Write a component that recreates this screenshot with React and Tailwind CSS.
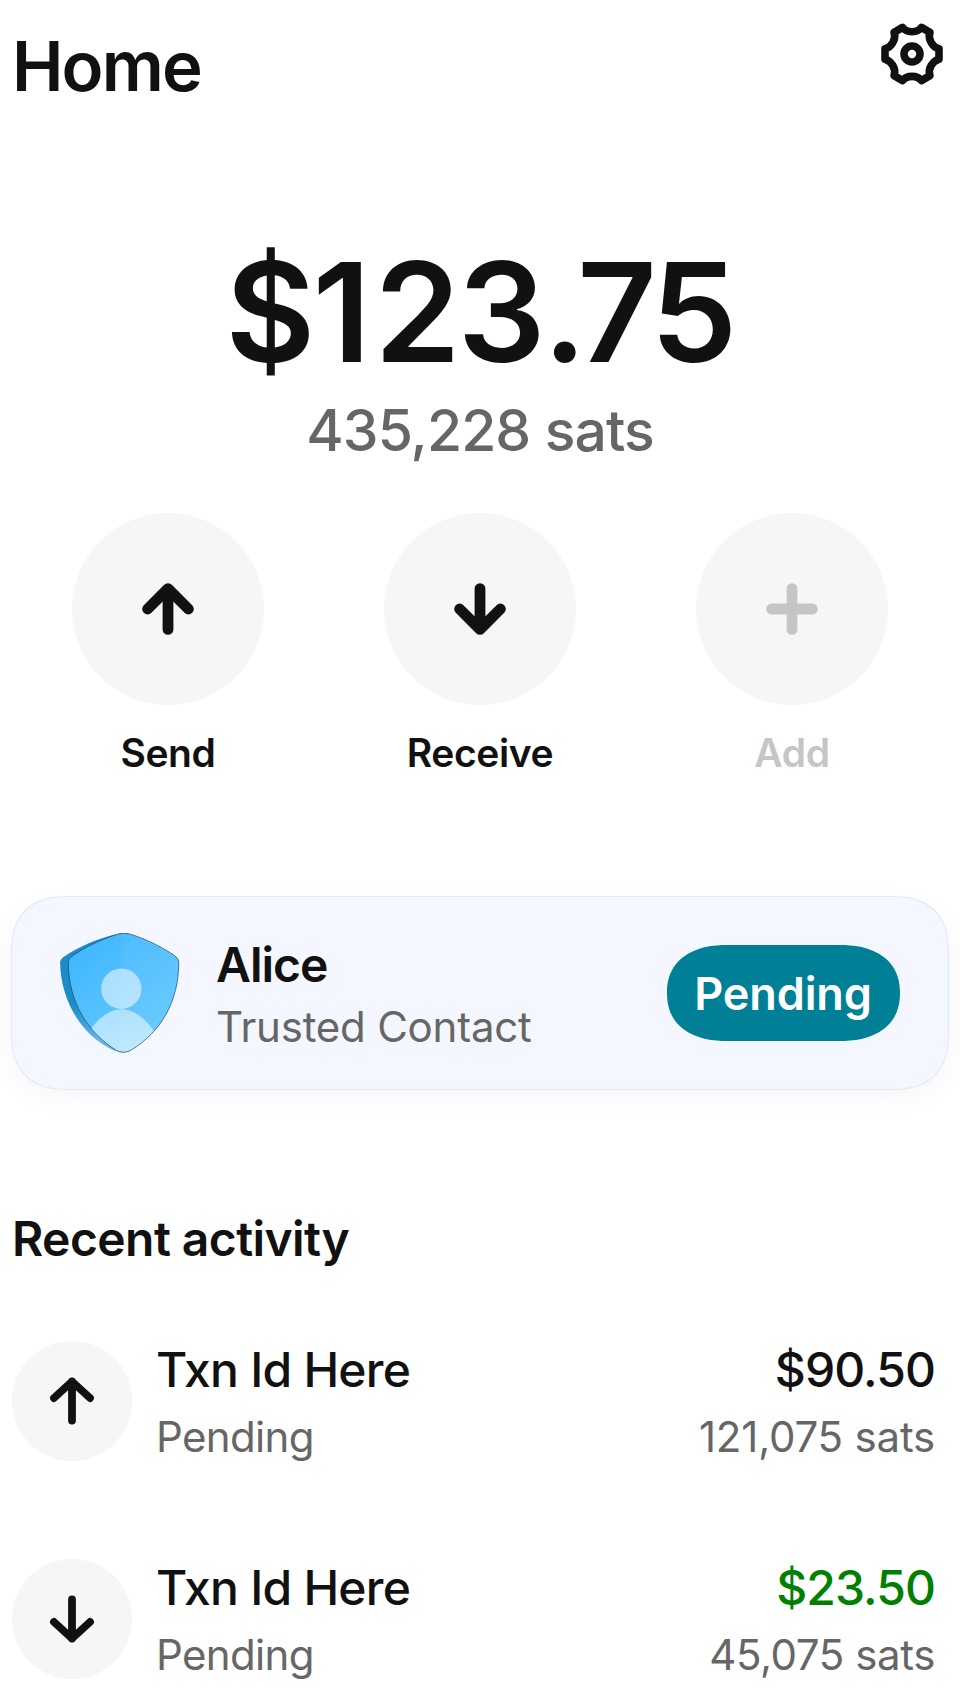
import React from "react";

function GearIcon() {
  return (
    <svg className="mt-[18px] size-[72px]" viewBox="-36 -36 72 72" fill="none" stroke="currentColor" strokeWidth="7.6" strokeLinejoin="round">
      <path d="M27 -5.2V5.2C21 6.6 15.4 14.5 17.9 21.6L9.4 26.6C5.4 20.9 -5.4 20.9 -9.4 26.6L-17.9 21.6C-15.4 14.5 -21 6.6 -27 5.2V-5.2C-21 -6.6 -15.4 -14.5 -17.9 -21.6L-9.4 -26.6C-5.4 -20.9 5.4 -20.9 9.4 -26.6L17.9 -21.6C15.4 -14.5 21 -6.6 27 -5.2Z" />
      <circle r="8" />
    </svg>
  );
}

const ACTION_PATHS = {
  up: "M0 20.4V-20.4M-20.4 0L0 -20.4L20.4 0",
  down: "M0 -20.4V20.4M-20.4 0L0 20.4L20.4 0",
  plus: "M0 -20.4V20.4M-20.4 0H20.4",
};

function Action({ icon, label, disabled }) {
  return (
    <div className={`flex w-48 flex-col items-center ${disabled ? "text-[#c5c5c5]" : "text-[#111111]"}`}>
      <div className="flex size-48 items-center justify-center rounded-full bg-[#f6f6f6]">
        <svg className="size-[72px]" viewBox="-36 -36 72 72" fill="none" stroke="currentColor" strokeWidth="10.8" strokeLinecap="round" strokeLinejoin="round">
          <path d={ACTION_PATHS[icon]} />
        </svg>
      </div>
      <span className="mt-6 text-[39px] leading-[48px] font-semibold tracking-[-0.4px]">{label}</span>
    </div>
  );
}

function ShieldAvatar() {
  const front =
    "M57.5 1.2Q64 -1 70.5 1.2C90 7.5 104 15.5 114.5 22.5Q119 25.5 118.8 30C118.5 69 101 99 70.5 117.5Q63.5 121 56.5 117.5C27 99 8.8 69 8.3 30Q8 25.5 13 22.5C23 15.5 38 7.5 57.5 1.2Z";
  return (
    <svg className="size-[120px] shrink-0" viewBox="0 0 120 120">
      <defs>
        <linearGradient id="face" x1="0.2" y1="0.1" x2="0.8" y2="0.9">
          <stop offset="0" stopColor="#43b8ff" />
          <stop offset="1" stopColor="#68caff" />
        </linearGradient>
        <linearGradient id="edge" x1="0" y1="0" x2="0.3" y2="1">
          <stop offset="0.6" stopColor="#1c8cc9" />
          <stop offset="1" stopColor="#62b9e8" />
        </linearGradient>
        <linearGradient id="body" x1="0" y1="0" x2="0" y2="1">
          <stop offset="0" stopColor="#fff" stopOpacity="0.5" />
          <stop offset="1" stopColor="#fff" stopOpacity="0.58" />
        </linearGradient>
        <clipPath id="faceClip">
          <path d={front} />
        </clipPath>
      </defs>
      <path d="M57.5 1C38 5 18 14 3.5 24Q0 26.5 0.1 30C0.8 66 20 102 54 117.5L64 119.8V0Z" fill="url(#edge)" />
      <path d={front} fill="url(#face)" />
      <g clipPath="url(#faceClip)">
        <rect x="61" y="0" width="60" height="120" fill="#fff" fillOpacity="0.03" />
        <circle cx="61.3" cy="55.7" r="20.2" fill="#fff" fillOpacity="0.53" />
        <path d="M28 100C37 86 49 76.3 61.3 76.3C74 76.3 85 85 94.5 99V120H28Z" fill="url(#body)" />
      </g>
      <path d={front} fill="none" stroke="#1f4d6b" strokeOpacity="0.8" strokeWidth="0.9" />
    </svg>
  );
}

const ROW_PATHS = {
  up: "M0 19.5V-19.5M-18 -3L0 -19.5L18 -3",
  down: "M0 -19.5V19.5M-18 3L0 19.5L18 3",
};

function Transaction({ icon, amount, amountColor, sats, satsTracking }) {
  return (
    <li className="flex h-[120px] items-center">
      <div className="flex size-[120px] shrink-0 items-center justify-center rounded-full bg-[#f6f6f6]">
        <svg className="size-[60px]" viewBox="-30 -30 60 60" fill="none" stroke="currentColor" strokeWidth="7.8" strokeLinecap="round" strokeLinejoin="round">
          <path d={ROW_PATHS[icon]} />
        </svg>
      </div>
      <div className="mt-1 ml-6 flex flex-1 flex-col leading-[67px]">
        <span className="text-[48px] font-medium tracking-[-0.77px]">Txn Id Here</span>
        <span className="text-[42px] tracking-[-0.65px] text-[#666666]">Pending</span>
      </div>
      <div className="mt-1 flex flex-col items-end pr-[13px] leading-[67px]">
        <span className={`text-[48px] font-medium tracking-[-0.9px] ${amountColor}`}>{amount}</span>
        <span className={`text-[42px] text-[#666666] ${satsTracking}`}>{sats}</span>
      </div>
    </li>
  );
}

export default function App() {
  return (
    <main className="flex h-[1704px] w-[960px] flex-col overflow-hidden bg-white font-['Inter',sans-serif] whitespace-nowrap text-[#111111]">
      <header className="flex h-[120px] shrink-0 items-start justify-between px-3">
        <h1 className="mt-6 text-[69px] leading-[84px] font-semibold tracking-[-1.86px]">Home</h1>
        <GearIcon />
      </header>

      <section className="mt-[131px] flex flex-col items-center">
        <p className="text-[138px] leading-[121px] font-semibold tracking-[-2.8px]">
          $<span className="tracking-[3.6px]">1</span>23<span className="tracking-[-6.4px]">.7</span>5
        </p>
        <p className="mt-[23px] text-[57px] leading-[72px] font-medium tracking-[-0.9px] text-[#666666]">435,228 sats</p>
      </section>

      <nav className="mt-[46px] flex justify-center gap-[120px]">
        <Action icon="up" label="Send" />
        <Action icon="down" label="Receive" />
        <Action icon="plus" label="Add" disabled />
      </nav>

      <section className="mx-[11px] mt-[119px] flex h-[194px] shrink-0 items-center rounded-[60px] border border-[#e0e8f8] bg-[#f4f7ff] px-12 shadow-[0_8px_28px_rgba(0,0,0,0.04)] [corner-shape:superellipse(1.38)]">
        <ShieldAvatar />
        <div className="mt-1 ml-9 flex flex-1 flex-col">
          <span className="text-[48px] leading-[62px] font-semibold tracking-[-1px]">Alice</span>
          <span className="text-[42px] leading-[61px] tracking-[-0.22px] text-[#666666]">Trusted Contact</span>
        </div>
        <span className="flex h-24 w-[233px] items-center justify-center rounded-[60px/48px] bg-[#008096] pt-0.5 pr-px text-[45px] font-semibold tracking-[-0.1px] text-white [corner-shape:superellipse(1.2)]">
          Pending
        </span>
      </section>

      <section className="mt-[119px] px-3">
        <h2 className="text-[48px] leading-[60px] font-semibold tracking-[-0.58px]">Recent activity</h2>
        <ul className="mt-[72px] flex flex-col gap-[98px]">
          <Transaction icon="up" amount="$90.50" amountColor="text-[#111111]" sats="121,075 sats" satsTracking="tracking-[-0.2px]" />
          <Transaction icon="down" amount="$23.50" amountColor="text-[#008000]" sats="45,075 sats" satsTracking="tracking-[-0.4px]" />
        </ul>
      </section>
    </main>
  );
}
